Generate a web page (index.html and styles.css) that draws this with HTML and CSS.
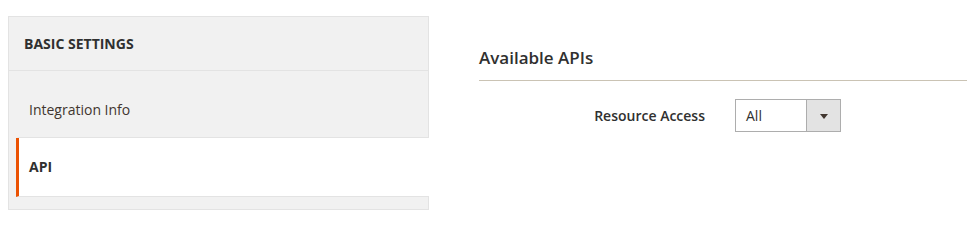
FILE: index.html
```html
<!DOCTYPE html>
<html lang="en">
<head>
  <meta charset="UTF-8">
  <title>Integration - API</title>
  <link rel="stylesheet" href="styles.css">
</head>
<body>

  <div class="page">
    <!-- Navegacion lateral -->
    <div class="side-nav">
      <div class="side-nav-title">Basic Settings</div>
      <ul class="side-nav-items">
        <li class="side-nav-item"><a href="#">Integration Info</a></li>
        <li class="side-nav-item active"><a href="#">API</a></li>
      </ul>
    </div>

    <!-- Contenido -->
    <div class="main">
      <h2 class="legend">Available APIs</h2>
      <div class="field">
        <label class="field-label">Resource Access</label>
        <div class="select">
          <span class="select-value">All</span>
          <span class="select-arrow"></span>
        </div>
      </div>
    </div>
  </div>

</body>
</html>
```

FILE: styles.css
```css
body {
  font-family: "Open Sans", Arial, sans-serif;
  font-size: 14px;
  color: #41362f;
  background-color: #fff;
  margin: 0;
  padding: 16px 0 0 8px;
}
.page {
  display: flex;
  align-items: flex-start;
}

/* Navegacion lateral */
.side-nav {
  width: 421px;
  box-sizing: border-box;
  background-color: #f1f1f1;
  border: 1px solid #e3e3e3;
  padding-bottom: 12px;
}
.side-nav-title {
  padding: 17px 15px 16px;
  line-height: 20px;
  font-weight: 700;
  text-transform: uppercase;
  color: #303030;
  border-bottom: 1px solid #e3e3e3;
}
.side-nav-items {
  list-style: none;
  margin: 0;
  padding: 10px 0 0;
}
.side-nav-item {
  margin-left: 7px;
  margin-right: -1px;
  border-left: 3px solid transparent;
  border-bottom: 1px solid #e3e3e3;
}
.side-nav-item a {
  display: block;
  padding: 19px 10px;
  line-height: 20px;
  color: #41362f;
  text-decoration: none;
}
.side-nav-item:first-child a {
  padding-bottom: 17px;
}
.side-nav-item.active {
  background-color: #fff;
  border-left-color: #eb5202;
}
.side-nav-item.active a {
  font-weight: 700;
  color: #303030;
}

/* Contenido */
.main {
  flex: 1;
  margin-left: 50px;
  padding-top: 31px;
}
.legend {
  margin: 0;
  font-size: 17px;
  font-weight: 600;
  line-height: 22px;
  color: #303030;
  padding-bottom: 11px;
  border-bottom: 1px solid #cac3b4;
}
.field {
  display: grid;
  grid-template-columns: 226px auto;
  column-gap: 30px;
  align-items: center;
  margin-top: 18px;
}
.field-label {
  text-align: right;
  font-weight: 600;
  color: #303030;
}
.select {
  display: flex;
  width: 106px;
  height: 33px;
  box-sizing: border-box;
  border: 1px solid #adadad;
  background-color: #fff;
}
.select-value {
  flex: 1;
  padding-left: 10px;
  line-height: 31px;
  color: #303030;
}
.select-arrow {
  width: 33px;
  border-left: 1px solid #adadad;
  background-color: #e3e3e3;
  position: relative;
}
.select-arrow::after {
  content: "";
  position: absolute;
  left: 13px;
  top: 14px;
  border-left: 4px solid transparent;
  border-right: 4px solid transparent;
  border-top: 5px solid #41362f;
}
```
